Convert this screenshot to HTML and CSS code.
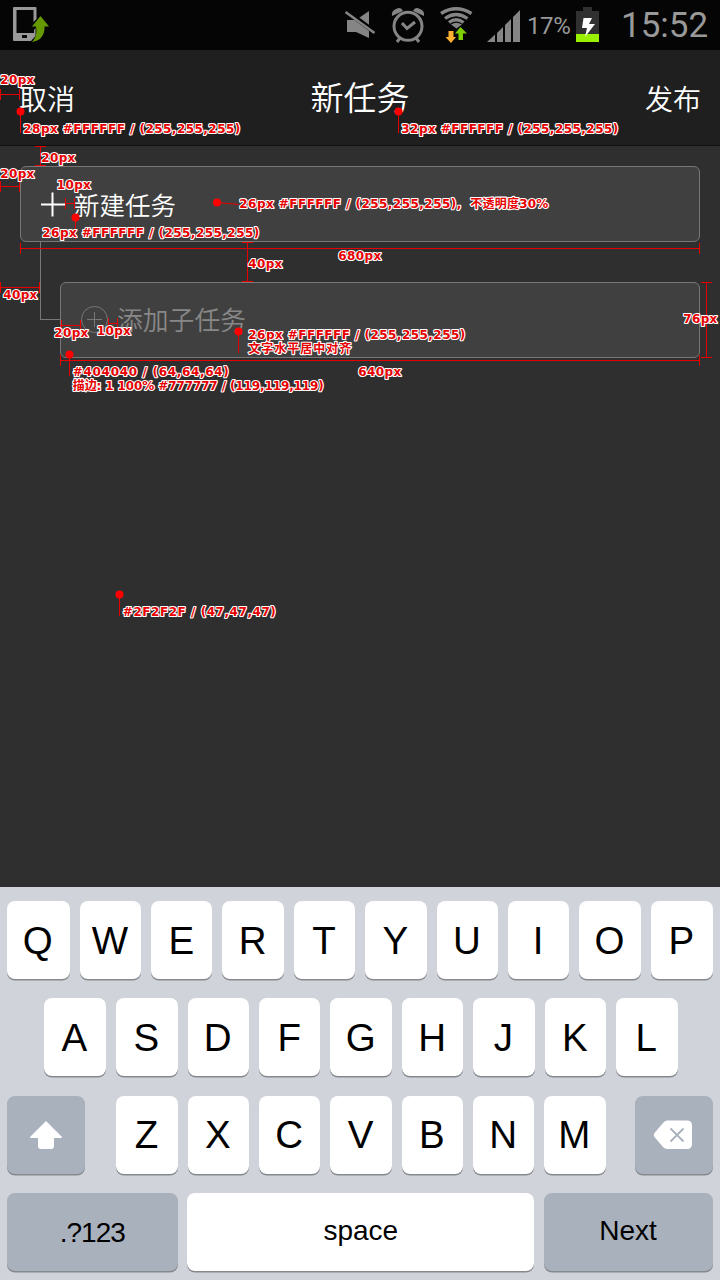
FILE: index.html
```html
<!DOCTYPE html>
<html lang="zh-CN">
<head>
<meta charset="utf-8">
<title>新任务</title>
<link rel="stylesheet" href="styles.css">
</head>
<body>
<div class="screen">
  <div class="status">
    <svg class="ic-phone" width="40" height="50" viewBox="12 0 40 50">
      <path fill="#999" fill-rule="evenodd" d="M14 7H35.5Q36.500 7 36.500 8V19L33.500 22V10H16.500V33H34V30L35.500 28V36L31 41H14Q13 41 13 40V8Q13 7 14 7ZM22 35V38H27V35Z"/>
      <path fill="#669900" d="M40.500 16L49 26.500H44.500C45 34 41 41 32 42C36 38 37 33 36 26.500H32Z"/>
    </svg>
    <div class="status-right">
      <svg width="32" height="50" viewBox="344 0 32 50">
        <path fill="#858585" d="M347 20V32H356L369 38V11L356 20Z"/>
        <path stroke="#050505" stroke-width="5" d="M345 10L376 33"/>
        <path stroke="#858585" stroke-width="2.600" d="M345.500 12L374.500 33"/>
      </svg>
      <svg class="ic-alarm" width="34" height="50" viewBox="391 0 34 50" fill="none" stroke="#858585">
        <circle cx="408" cy="26.300" r="14" stroke-width="3"/>
        <path stroke-width="3" d="M402 23L407 28.500L415 22M400 38L397 42M416 38L419 42"/>
        <path fill="#858585" stroke="none" d="M392 16Q391 11 396 9Q401 6 403 11ZM424 16Q425 11 420 9Q415 6 413 11Z"/>
      </svg>
      <svg class="ic-wifi" width="36" height="50" viewBox="438 0 36 50">
        <g fill="none" stroke="#858585" stroke-width="3.300"><path d="M441 13.500Q456 4 471.500 13.500M445 18.500Q456 10.500 467.500 18.500M449 22.500Q456 17 463.500 22.500"/></g>
        <path fill="#858585" d="M451 24.500Q456 21 462 24.500L456.500 28.500Z"/>
        <path fill="#ffb02e" d="M448.500 31H453.500V37H456L451 43L445.500 37H448.500Z"/>
        <path fill="#7fd000" d="M460.500 27L467 33.500H463V40H458.500V33.500H455Z"/>
      </svg>
      <svg class="ic-signal" width="34" height="50" viewBox="487 0 34 50" fill="#858585">
        <path d="M487 42L495 34.500V42ZM497 33L503 27V42H497ZM505 25L511 19V42H505ZM513 17L520 10V42H513Z"/>
      </svg>
      <span class="percent">17%</span>
      <svg class="ic-battery" width="24" height="50" viewBox="576 0 24 50">
        <path fill="#303030" d="M583 7H592V11H599V34H576V11H583Z"/><path fill="#99f000" d="M576 34H599V42H576Z"/>
        <path fill="#fff" d="M583.500 18H592L589 24H595L585 37L587 28H582Z"/>
      </svg>
      <span class="clock">15:52</span>
    </div>
  </div>
  <header class="nav"><span class="nav-side">取消</span><h1 class="nav-title">新任务</h1><span class="nav-side nav-end">发布</span></header>
  <main class="tasks">
    <div class="task">
      <svg width="25" height="26" viewBox="0 0 25 26"><path stroke="#fff" stroke-width="2" d="M1 13.500H25M12.500 1.500V25.500"/></svg>
      <span class="task-label">新建任务</span>
    </div>
    <div class="branch">
      <div class="connector"></div>
      <div class="task subtask">
        <svg width="28" height="28" viewBox="0 0 28 28" fill="none" stroke="#777"><circle cx="14.500" cy="13.500" r="13"/><path d="M7 13.500H22M14.500 6V21"/></svg>
        <span class="task-label">添加子任务</span>
      </div>
    </div>
  </main>
  <div class="keyboard">
    <div class="row"><b class="key wide-q">Q</b><b class="key">W</b><b class="key">E</b><b class="key">R</b><b class="key">T</b><b class="key">Y</b><b class="key">U</b><b class="key">I</b><b class="key">O</b><b class="key wide-p">P</b></div>
    <div class="row row-home"><b class="key wide-q">A</b><b class="key">S</b><b class="key">D</b><b class="key">F</b><b class="key">G</b><b class="key">H</b><b class="key">J</b><b class="key">K</b><b class="key">L</b></div>
    <div class="row">
      <b class="key dark shift"><svg width="34" height="30" viewBox="0 0 34 30"><path fill="#fff" d="M17 1L33 17Q33.500 18 32 18H25V26Q25 29 22 29H12Q9 29 9 26V18H2Q.5 18 1 17Z"/></svg></b>
      <b class="key">Z</b><b class="key">X</b><b class="key">C</b><b class="key">V</b><b class="key">B</b><b class="key">N</b><b class="key">M</b>
      <b class="key dark delete"><svg width="40" height="30" viewBox="0 0 40 30"><path fill="#fff" d="M14 .5H34Q39 .5 39 5.500V24Q39 29 34 29H14Q12 29 10 27L1.500 17Q0 15 1.500 13L10 3Q12 .5 14 .5Z"/><path stroke="#a9b1bd" stroke-width="1.800" d="M17.500 8.500L30.500 21.500M30.500 8.500L17.500 21.500"/></svg></b>
    </div>
    <div class="row"><b class="key dark word num">.?123</b><b class="key word">space</b><b class="key dark word next">Next</b></div>
  </div>
  <svg class="notes" width="720" height="640" viewBox="0 0 720 640">
    <g class="rules">
      <path d="M0 94.500H20M.5 89V100M19.500 89V100"/>
      <path d="M20.500 112V133M398.500 112V133"/>
      <path d="M40.500 146V166M35 146.500H46M35 165.500H46"/>
      <path d="M0 186.500H20M.5 181V192M19.500 181V192"/>
      <path d="M65 203.500H75M65.500 198V209M74.500 198V209M75.500 218V239M217 202.500L239 204.500"/>
      <path d="M20 248.500H700M20.500 243V254M699.500 243V254"/>
      <path d="M247.500 242V282M242 242.500H253M242 281.500H253"/>
      <path d="M0 287.500H40M.5 282V293M39.500 282V293"/>
      <path d="M60 325.500H81M61.500 320V331M80.500 320V331M108 323.500H118M108.500 318V329M117.500 318V329"/>
      <path d="M238.500 332V353M69.500 354V376"/>
      <path d="M60 360.500H700M60.500 355V366M699.500 355V366"/>
      <path d="M706.500 282V358M701 282.500H712M701 357.500H712"/>
      <path d="M119.500 595V616"/>
    </g>
    <g class="dots"><circle cx="20.500" cy="111.500" r="4"/><circle cx="398.500" cy="111.500" r="4"/><circle cx="75.500" cy="217.500" r="4"/><circle cx="217" cy="202.500" r="4"/><circle cx="238.500" cy="331.500" r="4"/><circle cx="69.500" cy="354.500" r="4"/><circle cx="119.500" cy="594.500" r="4"/></g>
    <g class="labels" transform="translate(-.7 0)">
      <text x="1" y="84" textLength="34">20px</text>
      <text x="24" y="133" textLength="217">28px #FFFFFF / (255,255,255)</text>
      <text x="402" y="133" textLength="217">32px #FFFFFF / (255,255,255)</text>
      <text x="42" y="162" textLength="34">20px</text>
      <text x="1" y="178" textLength="34">20px</text>
      <text x="57.500" y="189" textLength="34">10px</text>
      <text x="240" y="208" textLength="222">26px #FFFFFF / (255,255,255),</text>
      <text x="471" y="208" textLength="78">不透明度30%</text>
      <text x="43" y="237" textLength="217">26px #FFFFFF / (255,255,255)</text>
      <text x="339" y="260" textLength="43">680px</text>
      <text x="249" y="268" textLength="34">40px</text>
      <text x="4" y="299" textLength="34">40px</text>
      <text x="684" y="323" textLength="34">76px</text>
      <text x="55" y="337" textLength="34">20px</text>
      <text x="97.500" y="335" textLength="34">10px</text>
      <text x="249" y="339" textLength="217">26px #FFFFFF / (255,255,255)</text>
      <text x="249" y="353" textLength="103">文字水平居中对齐</text>
      <text x="359" y="376" textLength="43">640px</text>
      <text x="73.500" y="376" textLength="156">#404040 / (64,64,64)</text>
      <text x="73.500" y="390" textLength="251">描边: 1 100% #777777 / (119,119,119)</text>
      <text x="123.500" y="616" textLength="153">#2F2F2F / (47,47,47)</text>
    </g>
  </svg>
</div>
</body>
</html>
```
FILE: styles.css
```css
* { box-sizing: border-box; }
body { margin: 0; background: #2f2f2f; }
svg { display: block; flex: none; }
.screen {
  position: relative;
  width: 720px;
  height: 1280px;
  overflow: hidden;
  display: flex;
  flex-direction: column;
  background: #2f2f2f;
  color: #fff;
  font-family: "Noto Sans CJK SC", sans-serif;
}
.status {
  height: 50px;
  flex: none;
  display: flex;
  justify-content: space-between;
  padding: 0 12px;
  background: #050505;
  color: #999;
  font-family: Roboto, sans-serif;
}
.status-right { display: flex; }
.ic-alarm { margin-left: 15px; }
.ic-wifi { margin-left: 13px; }
.ic-signal { margin-left: 13px; }
.percent { width: 49px; margin-left: 6px; font-size: 24px; line-height: 52px; font-weight: 400; letter-spacing: -.4px; white-space: nowrap; }
.clock { width: 87px; margin-left: 21px; font-size: 35px; line-height: 51px; font-weight: 400; }
.nav {
  height: 96px;
  flex: none;
  display: grid;
  grid-template-columns: 1fr auto 1fr;
  padding: 0 19px;
  background: #1f1f1f;
  border-bottom: 1px solid #111;
  line-height: 96px;
}
.nav-side { font-size: 28px; font-weight: 350; }
.nav-end { text-align: right; }
.nav-title { margin: 0; font-size: 33px; font-weight: 350; line-height: 92px; }
.tasks { flex: 1; padding: 20px; }
.task {
  height: 76px;
  display: flex;
  align-items: center;
  gap: 9px;
  padding: 0 19px;
  border: 1px solid #777;
  border-radius: 6px;
  background: #404040;
}
.task-label { padding-bottom: 1px; font-size: 25.500px; font-weight: 350; line-height: 38px; }
.branch { display: flex; padding-left: 20px; }
.connector { width: 20px; height: 78px; border: solid #777; border-width: 0 0 1px 1px; }
.subtask { flex: 1; margin-top: 40px; color: #888; }
.subtask .task-label { font-size: 25.800px; padding-bottom: 3px; }
.keyboard {
  height: 393px;
  flex: none;
  display: flex;
  flex-direction: column;
  gap: 18.400px;
  padding: 14px 7px 0;
  background: #d0d4da;
  color: #000;
  font-family: "Liberation Sans", sans-serif;
}
.row { display: flex; gap: 9.900px; height: 79px; }
.row-home { padding: 0 35.500px 0 36.500px; }
.key {
  flex: 1 1 0;
  height: 78px;
  display: flex;
  align-items: center;
  justify-content: center;
  padding: 1px 1px 0 0;
  border-radius: 8px;
  background: #fff;
  box-shadow: 0 1.500px 0 #85888c;
  font-size: 38.500px;
  font-weight: 400;
}
.wide-q { flex: 0 0 62.700px; }
.wide-p { flex: 0 0 62.300px; }
.dark { background: #a9b1bd; }
.shift { flex: 0 0 78px; margin-right: 21.500px; }
.delete { flex: 0 0 78px; margin-left: 19.500px; }
.word { font-size: 28px; padding: 0 0 3px; }
.num { flex: 0 0 170.500px; padding: 1px 0 0; letter-spacing: -1px; }
.next { flex: 0 0 169px; padding-right: 1px; }
.notes { position: absolute; left: 0; top: 0; }
.rules { fill: none; stroke: #e80000; stroke-width: 1; }
.dots { fill: #f00; }
.labels text {
  fill: #e60000;
  stroke: #fff;
  stroke-width: 2.200px;
  stroke-linejoin: round;
  paint-order: stroke;
  font: bold 12px "DejaVu Sans", "Noto Sans CJK SC", sans-serif;
}
```
